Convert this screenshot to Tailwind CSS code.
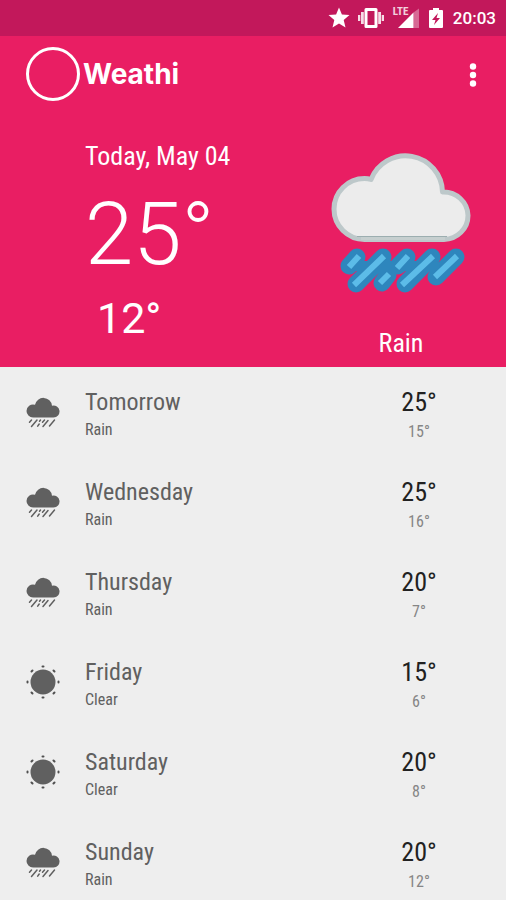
<!DOCTYPE html>
<html lang="en">
<head>
<meta charset="utf-8">
<meta name="viewport" content="width=device-width, initial-scale=1">
<title>Weathi</title>
<script src="https://cdn.jsdelivr.net/npm/@tailwindcss/browser@4"></script>
</head>
<body class="min-h-screen overflow-x-hidden bg-[#eeeeee] font-['Roboto_Condensed','Roboto',sans-serif]">
<svg class="hidden" aria-hidden="true">
  <symbol id="rain" viewBox="0 0 34 34">
    <path fill="#606060" d="M7 21.500a6.500 6.500 0 0 1-6.500-6.500 6.500 6.500 0 0 1 8.500-6.200A8.600 8.600 0 0 1 26 9.700a6 6 0 1 1 1.500 11.800z"/>
    <path stroke="#606060" stroke-width="1.500" stroke-linecap="round" fill="none" d="M5.500 24l-2 2.200M11 24l-5.500 6.500M14.500 24l-1 1.200M13.200 28l-1.500 2.200M22 24.500l-5 6M28.500 24l-5 6M18.500 24l-2 2.200"/>
  </symbol>
  <symbol id="sun" viewBox="0 0 34 34">
    <circle cx="17" cy="17" r="12.500" fill="#606060"/>
    <path stroke="#505050" stroke-width="2" stroke-linecap="round" fill="none" d="M16.500 1.500h1M16.500 32.500h1M1.500 16.500v1M32.500 16.500v1M5.500 6.500l1-1M27.500 5.500l1 1M5.500 27.500l1 1M27.500 28.500l1-1"/>
  </symbol>
</svg>

<div class="flex h-9 items-center justify-end bg-[#c2185b] pr-2.5 text-white">
  <svg class="mr-1.5 size-6" viewBox="0 0 24 24" fill="#fff" role="img" aria-label="Starred"><path d="M12 1.500l2.900 7 7.600.6-5.800 5 1.800 7.400L12 17.500l-6.500 4 1.800-7.400-5.800-5 7.600-.6z"/></svg>
  <svg class="mr-1.5 h-5 w-7" viewBox="0 0 28 20" fill="#fff" role="img" aria-label="Vibrate"><path fill-rule="evenodd" d="M9 0h10a1.500 1.500 0 0 1 1.500 1.500v17A1.500 1.500 0 0 1 19 20H9a1.500 1.500 0 0 1-1.500-1.500v-17A1.500 1.500 0 0 1 9 0zm1.500 3v14h7V3z"/><path fill-opacity=".85" d="M4 4h2.800v12H4zM1 7h2.300v6H1zM21.200 4H24v12h-2.800zM24.700 7H27v6h-2.300z"/></svg>
  <div class="relative mr-2.5 h-6 w-7">
    <span class="absolute left-0.5 top-0 text-[11px] font-bold leading-3 text-white/80">LTE</span>
    <svg class="size-full" viewBox="0 0 28 24" aria-hidden="true"><path fill="#fff" fill-opacity=".35" d="M22.500 6.500L28 2.500V22h-5.500z"/><path fill="#fff" d="M7 22L22.500 6.500V22z"/></svg>
  </div>
  <svg class="mr-2.5 h-5 w-3.5" viewBox="0 0 14 20" role="img" aria-label="Charging"><path fill="#fff" fill-rule="evenodd" d="M4 0h6v2h3a1 1 0 0 1 1 1v16a1 1 0 0 1-1 1H1a1 1 0 0 1-1-1V3a1 1 0 0 1 1-1h3zm5 5l-6 7h3.500L5 17l6-7H7.500z"/></svg>
  <span class="font-['Roboto',sans-serif] text-[17px] font-medium leading-5">20:03</span>
</div>

<header class="bg-[#e91e63] text-white">
  <div class="flex h-19 items-center pl-[25px] pr-[21px]">
    <svg class="size-14" viewBox="0 0 56 56" aria-hidden="true"><circle cx="28" cy="28" r="25.500" fill="none" stroke="#fff" stroke-width="3"/></svg>
    <h1 class="ml-0.5 flex-1 font-['Inter',sans-serif] text-[28px] font-bold leading-8">Weathi</h1>
    <button type="button" aria-label="More options" class="flex w-6 justify-center pt-0.5">
      <svg class="h-6 w-2" viewBox="0 0 8 24" fill="#fff" aria-hidden="true"><circle cx="4" cy="3.500" r="3.200"/><circle cx="4" cy="12" r="3.200"/><circle cx="4" cy="20.500" r="3.200"/></svg>
    </button>
  </div>
  <div class="flex h-[255px] pl-[85px]">
    <div class="flex-1 pt-7">
      <p class="text-[26px] leading-8">Today, May 04</p>
      <p class="pt-4 font-['Roboto',sans-serif] text-[87px] font-light leading-[92px]">25°</p>
      <p class="pl-3 pt-3.5 font-['Roboto',sans-serif] text-[43px] leading-12">12°</p>
    </div>
    <div class="flex w-[210px] flex-col items-center pt-10">
      <svg class="h-36 w-35 overflow-visible" viewBox="0 0 140 144" role="img" aria-label="Rain">
        <path fill="#ececec" stroke="#bdc8ca" stroke-width="5" stroke-linejoin="round" d="M33.500 87.500A30.500 30.500 0 0 1 33.500 26.500Q37 26.500 40 27.500A37 37 0 0 1 111.500 40A24.500 24 0 0 1 137 63.500A24.500 24 0 0 1 113 87.500z"/>
        <path stroke="#c6cfcf" stroke-width="4" d="M30 86h84"/>
        <path stroke="#9caeb0" stroke-width="1" d="M26 84.500h90"/>
        <g fill="none" stroke-linecap="round" stroke-linejoin="round">
          <path stroke="#2e86bd" stroke-width="17" d="M26 105l-8 9M52 105L25 132M57 123l-6 8M76 105l-9 9M101 105L74 132M125 105l-20 20"/>
          <path stroke="#2e86bd" stroke-width="10" d="M24 114h80"/>
          <path stroke="#5cbce8" stroke-width="6" stroke-linecap="butt" d="M28 104L18 115M53 104L23 133M58 122L49 131M77 104L66 116M102 104L71 133M126 104l-22 21"/>
        </g>
      </svg>
      <p class="pt-[31px] text-[26px] leading-8">Rain</p>
    </div>
  </div>
</header>

<main>
  <ul class="text-[#606060]">
    <li class="flex h-[90px] items-center pl-[26px] pt-1">
      <svg class="mb-0.5 size-[34px]" aria-hidden="true"><use href="#rain"/></svg>
      <div class="flex-1 pl-[25px]"><h2 class="text-2xl leading-8">Tomorrow</h2><p class="py-0.5 text-base leading-5">Rain</p></div>
      <div class="w-[174px] text-center"><p class="text-[26px] leading-8 text-[#212121]">25°</p><p class="pt-1 text-base leading-5 text-[#858585]">15°</p></div>
    </li>
    <li class="flex h-[90px] items-center pl-[26px] pt-1">
      <svg class="mb-0.5 size-[34px]" aria-hidden="true"><use href="#rain"/></svg>
      <div class="flex-1 pl-[25px]"><h2 class="text-2xl leading-8">Wednesday</h2><p class="py-0.5 text-base leading-5">Rain</p></div>
      <div class="w-[174px] text-center"><p class="text-[26px] leading-8 text-[#212121]">25°</p><p class="pt-1 text-base leading-5 text-[#858585]">16°</p></div>
    </li>
    <li class="flex h-[90px] items-center pl-[26px] pt-1">
      <svg class="mb-0.5 size-[34px]" aria-hidden="true"><use href="#rain"/></svg>
      <div class="flex-1 pl-[25px]"><h2 class="text-2xl leading-8">Thursday</h2><p class="py-0.5 text-base leading-5">Rain</p></div>
      <div class="w-[174px] text-center"><p class="text-[26px] leading-8 text-[#212121]">20°</p><p class="pt-1 text-base leading-5 text-[#858585]">7°</p></div>
    </li>
    <li class="flex h-[90px] items-center pl-[26px] pt-1">
      <svg class="mb-1 size-[34px]" aria-hidden="true"><use href="#sun"/></svg>
      <div class="flex-1 pl-[25px]"><h2 class="text-2xl leading-8">Friday</h2><p class="py-0.5 text-base leading-5">Clear</p></div>
      <div class="w-[174px] text-center"><p class="text-[26px] leading-8 text-[#212121]">15°</p><p class="pt-1 text-base leading-5 text-[#858585]">6°</p></div>
    </li>
    <li class="flex h-[90px] items-center pl-[26px] pt-1">
      <svg class="mb-1 size-[34px]" aria-hidden="true"><use href="#sun"/></svg>
      <div class="flex-1 pl-[25px]"><h2 class="text-2xl leading-8">Saturday</h2><p class="py-0.5 text-base leading-5">Clear</p></div>
      <div class="w-[174px] text-center"><p class="text-[26px] leading-8 text-[#212121]">20°</p><p class="pt-1 text-base leading-5 text-[#858585]">8°</p></div>
    </li>
    <li class="flex h-[90px] items-center pl-[26px] pt-1">
      <svg class="mb-0.5 size-[34px]" aria-hidden="true"><use href="#rain"/></svg>
      <div class="flex-1 pl-[25px]"><h2 class="text-2xl leading-8">Sunday</h2><p class="py-0.5 text-base leading-5">Rain</p></div>
      <div class="w-[174px] text-center"><p class="text-[26px] leading-8 text-[#212121]">20°</p><p class="pt-1 text-base leading-5 text-[#858585]">12°</p></div>
    </li>
  </ul>
</main>
</body>
</html>
